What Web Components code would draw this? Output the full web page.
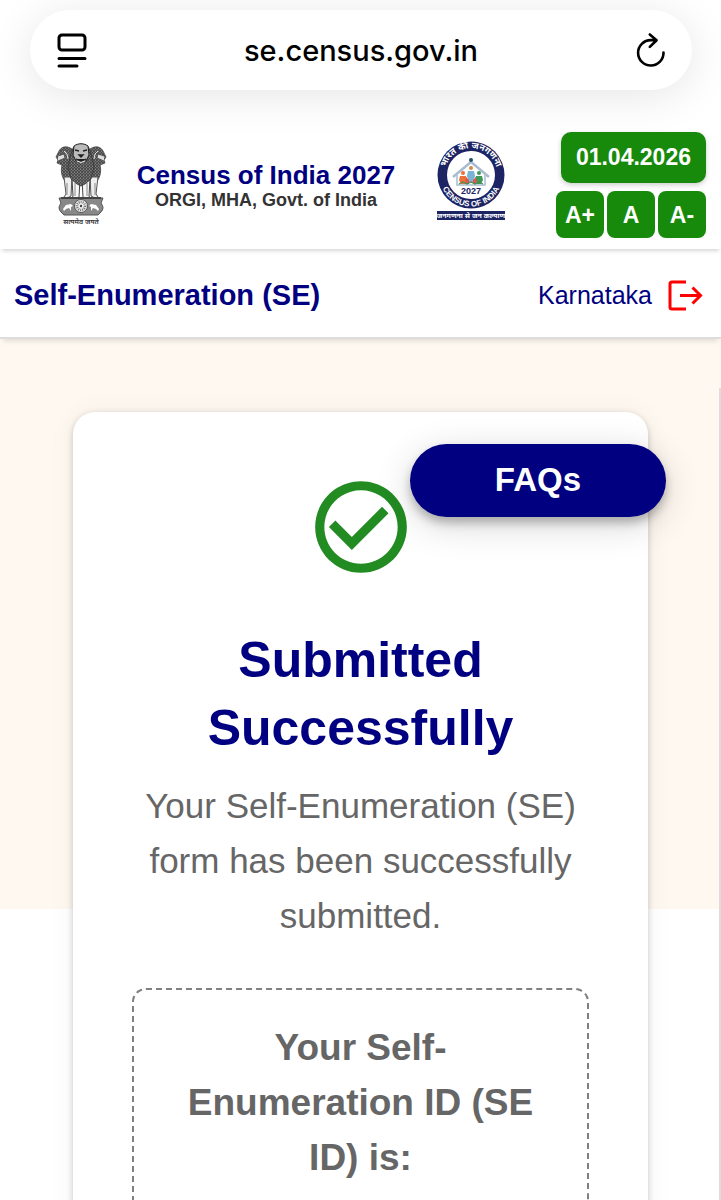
<!DOCTYPE html>
<html lang="en">
<head>
<meta charset="utf-8">
<meta name="viewport" content="width=device-width, initial-scale=1">
<title>Self-Enumeration (SE)</title>
<style>
  html, body { margin: 0; height: 100%; }
  body {
    --navy: #000080;
    --green: #178a0c;
    --grey: #666;
    font-family: "Liberation Sans", Arial, Helvetica, sans-serif;
    background: #fff;
    color: #333;
  }
</style>
</head>
<body>
<census-app>
  <address-bar slot="browser" url="se.census.gov.in"></address-bar>
  <site-header slot="header" date="01.04.2026">
    <span slot="title">Census of India 2027</span>
    <span slot="subtitle">ORGI, MHA, Govt. of India</span>
  </site-header>
  <page-nav slot="nav" region="Karnataka">Self-Enumeration (SE)</page-nav>
  <faq-button slot="float">FAQs</faq-button>
  <success-card>
    <span slot="heading">Submitted Successfully</span>
    <span slot="message">Your Self-Enumeration (SE) form has been successfully submitted.</span>
    <se-id-box>Your Self-Enumeration ID (SE ID) is:</se-id-box>
  </success-card>
</census-app>

<script>
class CensusApp extends HTMLElement {
  constructor() {
    super();
    this.attachShadow({ mode: "open" });
    this.shadowRoot.innerHTML = `
      <style>
        :host { display: flex; flex-direction: column; position: relative; height: 100vh; overflow: hidden; }
        main {
          flex: 1;
          display: flex;
          padding: 73px 73px 0;
          background: linear-gradient(#fff8f1, #fff8f1) no-repeat 0 0 / 100% 570px;
        }
        .thumb { position: absolute; right: 0; top: 388px; bottom: 0; width: 2px; background: #ddd; }
      </style>
      <slot name="browser"></slot>
      <slot name="header"></slot>
      <slot name="nav"></slot>
      <main><slot></slot></main>
      <slot name="float"></slot>
      <div class="thumb"></div>
    `;
  }
}

class AddressBar extends HTMLElement {
  constructor() {
    super();
    this.attachShadow({ mode: "open" });
    this.render();
  }

  render() {
    this.shadowRoot.innerHTML = `
      <style>
        :host { display: block; padding: 10px 29px 0 30px; }
        form {
          display: flex;
          align-items: center;
          height: 80px;
          padding: 0 26px;
          box-sizing: border-box;
          border-radius: 40px;
          background: #fff;
          box-shadow: 0 6px 44px rgba(0, 0, 0, .1);
        }
        button { border: 0; padding: 0; background: none; display: flex; color: #000; }
        input {
          flex: 1;
          min-width: 0;
          border: 0;
          padding: 2px 0 0;
          background: none;
          text-align: center;
          font: 500 29px/40px Inter, sans-serif;
          color: #000;
        }
        svg { display: block; fill: none; stroke: currentColor; stroke-width: 3; stroke-linecap: round; }
      </style>
      <form>
        <button type="button" aria-label="Page menu">
          <svg width="32" height="36" viewBox="0 0 32 36">
            <rect x="3" y="3" width="26" height="15" rx="3"/>
            <path d="M3 26.500h26M3 34h18"/>
          </svg>
        </button>
        <input type="text" aria-label="Address" value="${this.getAttribute("url") || ""}" readonly>
        <button type="button" aria-label="Reload">
          <svg width="32" height="36" viewBox="0 0 32 36">
            <path d="M29.500 20.500a12.700 12.700 0 1 1-12.700-12.400h5.500M15.800 2.500l6.800 5.700-6.800 6.700" stroke-linejoin="round" stroke-width="2.600"/>
          </svg>
        </button>
      </form>
    `;
  }
}

class NationalEmblem extends HTMLElement {
  constructor() {
    super();
    this.attachShadow({ mode: "open" });
    this.shadowRoot.innerHTML = `
      <style>
        :host { display: block; }
        svg { display: block; }
        text { font-family: "Noto Sans", sans-serif; font-size: 7px; font-weight: 600; }
      </style>
      <svg width="52" height="86" viewBox="0 0 52 86" role="img" aria-label="State Emblem of India">
        <defs>
          <pattern id="fur" width="3" height="3" patternUnits="userSpaceOnUse">
            <rect width="3" height="3" fill="#858585"/>
            <path d="M0 0l1.500 2L3 0M0 3l1.500-1L3 3" stroke="#333" stroke-width=".8" fill="none"/>
          </pattern>
        </defs>
        <!-- side lions -->
        <path d="M17 7C11 3 6 5 4 9L1 15l2 3-1 3 5 2c-2 8 1 15 5 18h9z" fill="url(#fur)" stroke="#444" stroke-width=".8"/>
        <path d="M35 7c6-4 11-2 13 2l3 6-2 3 1 3-5 2c2 8-1 15-5 18h-9z" fill="url(#fur)" stroke="#444" stroke-width=".8"/>
        <path d="M3 14l6-2 1 4-7 3M49 14l-6-2-1 4 7 3" fill="#ddd" stroke="#444" stroke-width=".8"/>
        <path d="M9 9q4 2 4 8M43 9q-4 2-4 8" fill="none" stroke="#ddd"/>
        <!-- legs -->
        <path d="M9 35h8l-1 19-6 3-1-2 2-3zM43 35h-8l1 19 6 3 1-2-2-3z" fill="#eee" stroke="#555"/>
        <path d="M17 37h8l-1 18-2 3h-6l2-4zM35 37h-8l1 18 2 3h6l-2-4z" fill="#f7f7f7" stroke="#444"/>
        <path d="M20 41v13M32 41v13M12 41v12M40 41v12" stroke="#888"/>
        <!-- front lion -->
        <path d="M18 6c2-5 14-5 16 0l3 9 2 10-3 12-6 5-4 2-4-2-6-5-3-12 2-10z" fill="url(#fur)" stroke="#333" stroke-width=".8"/>
        <path d="M19 4c4-3 10-3 14 0l1 9-3 6H21l-3-6z" fill="#bbb" stroke="#222"/>
        <path d="M20 8l4 1M32 8l-4 1M24 13h4l-2 2zM21 17q5 3 10 0" fill="#222" stroke="#222" stroke-width="1.400"/>
        <path d="M22 19q4 3 8 0" stroke="#eee" fill="none"/>
        <!-- abacus -->
        <path d="M4 56h44l-2 5q4 5 0 9l-3 3H9l-3-3q-4-4 0-9z" fill="#888" stroke="#555"/>
        <path d="M6 56h40" stroke="#444" stroke-width="2"/>
        <circle cx="26" cy="64" r="6.500" fill="#eee" stroke="#555"/>
        <circle cx="26" cy="64" r="4" fill="none" stroke="#777" stroke-width="2.500" stroke-dasharray="1 1"/>
        <circle cx="26" cy="64" r="1.200" fill="#444"/>
        <path d="M8 67l3-4 5-1 2 2-2 1v4l-2-3-3 1-2 2zM44 67l-3-4-5-1-2 2 2 1v4l2-3 3 1 2 2z" fill="#fff"/>
        <text x="26" y="82" text-anchor="middle" fill="#333">सत्यमेव जयते</text>
      </svg>
    `;
  }
}

class CensusLogo extends HTMLElement {
  constructor() {
    super();
    this.attachShadow({ mode: "open" });
    this.shadowRoot.innerHTML = `
      <style>
        :host { display: block; }
        svg { display: block; }
        text { font-family: "Liberation Sans", "Noto Sans", sans-serif; font-weight: 700; }
      </style>
      <svg width="68" height="80" viewBox="0 0 68 80" role="img" aria-label="Census of India 2027 logo">
        <defs>
          <path id="top" d="M8.200 40A26.500 26.500 0 1 1 59.800 40"/>
          <path id="bottom" d="M2.500 34a31.500 31.500 0 0 0 63 0"/>
        </defs>
        <circle cx="34" cy="34" r="33.500" fill="#1c2464"/>
        <circle cx="34" cy="34" r="24" fill="#fff"/>
        <text font-size="9" fill="#fff" text-anchor="middle"><textPath href="#top" startOffset="50%">भारत की जनगणना</textPath></text>
        <text font-size="8" fill="#fff" text-anchor="middle"><textPath href="#bottom" startOffset="50%">CENSUS OF INDIA</textPath></text>
        <!-- house -->
        <path d="M16 36L34 21l18 15" fill="none" stroke="#a9bdd0" stroke-width="2.500"/>
        <path d="M20 34v10h28V34" fill="none" stroke="#a9bdd0" stroke-width="1.500"/>
        <circle cx="34" cy="19" r="2" fill="#234c6a"/>
        <circle cx="34" cy="27" r="2" fill="#ce8b48"/>
        <path d="M31 30h6l1 5-2 7h-4l-2-7z" fill="#7ab4d4"/>
        <g fill="#ee7139"><circle cx="26" cy="32" r="2"/><path d="M23 35h6l1 3-2 5h-4l-2-4z"/></g>
        <g fill="#3d9a59"><circle cx="42" cy="32" r="2"/><path d="M39 35h6l1 4-2 4h-4l-2-5z"/></g>
        <path d="M29 36l3 3v4h-4zM39 36l-3 3v4h4z" fill="#df5648"/>
        <path d="M22 43l4-2 4 2 4-2 4 2 4-2 4 2" fill="none" stroke="#498d58" stroke-width="1.200"/>
        <text x="34" y="53" font-size="9" fill="#1c2464" text-anchor="middle">2027</text>
        <rect x="0" y="70" width="68" height="9" fill="#1c2464"/>
        <text x="34" y="77" font-size="7" fill="#fff" text-anchor="middle">जनगणना से जन कल्याण</text>
      </svg>
    `;
  }
}

class SiteHeader extends HTMLElement {
  constructor() {
    super();
    this.attachShadow({ mode: "open" });
    this.render();
  }

  render() {
    this.shadowRoot.innerHTML = `
      <style>
        :host { display: block; }
        header {
          display: flex;
          align-items: center;
          padding: 42px 15px 11px 55px;
          box-shadow: 0 4px 4px -2px rgba(0, 0, 0, .16);
        }
        .title { flex: 1; padding: 2px 12px 0 0; text-align: center; font-weight: 700; white-space: nowrap; }
        .name { font-size: 26px; line-height: 28px; color: var(--navy); }
        .org { font-size: 18px; line-height: 22px; }
        census-logo { align-self: flex-start; margin-top: 9px; }
        .tools { display: flex; flex-direction: column; align-items: flex-end; gap: 8px; margin-left: 51px; }
        time, button {
          border: 0;
          border-radius: 8px;
          background: var(--green);
          color: #fff;
          font: 700 23px/26px "Liberation Sans", Arial, sans-serif;
        }
        time { padding: 12px 15px 13px; border-radius: 10px; box-shadow: 0 2px 5px rgba(0, 0, 0, .2); }
        .sizes { display: flex; gap: 3px; }
        button { width: 48px; height: 47px; padding: 0; }
      </style>
      <header>
        <national-emblem></national-emblem>
        <div class="title">
          <div class="name"><slot name="title"></slot></div>
          <div class="org"><slot name="subtitle"></slot></div>
        </div>
        <census-logo></census-logo>
        <div class="tools">
          <time>${this.getAttribute("date") || ""}</time>
          <div class="sizes">
            <button type="button">A+</button>
            <button type="button">A</button>
            <button type="button">A-</button>
          </div>
        </div>
      </header>
    `;
  }
}

class PageNav extends HTMLElement {
  constructor() {
    super();
    this.attachShadow({ mode: "open" });
    this.render();
  }

  render() {
    this.shadowRoot.innerHTML = `
      <style>
        :host { display: block; }
        nav {
          display: flex;
          align-items: center;
          gap: 15px;
          padding: 29px 18px 24px 14px;
          border-bottom: 2px solid #ddd;
          color: var(--navy);
          box-shadow: 0 5px 5px -3px rgba(0, 0, 0, .12);
          position: relative;
        }
        .page { flex: 1; font-size: 29px; line-height: 35px; font-weight: 700; }
        .region { font-size: 25px; line-height: 35px; }
        button { border: 0; padding: 0; background: none; }
        svg { display: block; fill: none; stroke: #f00; stroke-width: 3; }
      </style>
      <nav>
        <span class="page"><slot></slot></span>
        <span class="region">${this.getAttribute("region") || ""}</span>
        <button type="button" aria-label="Log out">
          <svg width="36" height="32" viewBox="0 0 36 32">
            <path d="M19 2H5q-2 0-2 2v23q0 2 2 2h14"/>
            <path d="M13 15.500h20M25.500 7.500l8 8-8 8"/>
          </svg>
        </button>
      </nav>
    `;
  }
}

class FaqButton extends HTMLElement {
  constructor() {
    super();
    this.attachShadow({ mode: "open" });
    // floats over the card, so it is placed from the right edge of the page
    this.shadowRoot.innerHTML = `
      <style>
        :host { position: absolute; top: 444px; right: 55px; }
        button {
          padding: 18px 85px 19px;
          border: 0;
          border-radius: 37px;
          background: var(--navy);
          color: #fff;
          font: 700 33px/36px "Liberation Sans", Arial, sans-serif;
          box-shadow: 0 6px 10px rgba(0, 0, 0, .25), 0 8px 36px rgba(0, 0, 0, .16);
        }
      </style>
      <button type="button"><slot></slot></button>
    `;
  }
}

class SuccessCard extends HTMLElement {
  constructor() {
    super();
    this.attachShadow({ mode: "open" });
    this.shadowRoot.innerHTML = `
      <style>
        :host {
          flex: 1;
          display: block;
          padding: 60px 59px 0;
          border-radius: 22px 22px 0 0;
          background: #fff;
          box-shadow: 0 2px 6px rgba(0, 0, 0, .2), 0 0 28px rgba(0, 0, 0, .05);
          text-align: center;
        }
        svg { display: block; margin: 0 auto 44px; fill: #228b22; }
        h1 { margin: 0 0 16px; font-size: 50px; line-height: 68px; color: var(--navy); }
        p { margin: 0 0 45px; font-size: 35px; line-height: 55px; color: var(--grey); }
      </style>
      <svg width="110" height="110" viewBox="0 0 24 24" aria-hidden="true">
        <path d="M16.590 7.580L10 14.170l-3.590-3.580L5 12l5 5 8-8zM12 2C6.480 2 2 6.480 2 12s4.480 10 10 10 10-4.480 10-10S17.520 2 12 2zm0 18c-4.420 0-8-3.580-8-8s3.580-8 8-8 8 3.580 8 8-3.580 8-8 8z"/>
      </svg>
      <h1><slot name="heading"></slot></h1>
      <p><slot name="message"></slot></p>
      <slot></slot>
    `;
  }
}

class SeIdBox extends HTMLElement {
  constructor() {
    super();
    this.attachShadow({ mode: "open" });
    this.shadowRoot.innerHTML = `
      <style>
        :host {
          display: block;
          min-height: 260px;
          padding: 30px;
          border: 2px dashed #808080;
          border-radius: 14px;
          color: var(--grey);
        }
        h2 { margin: 0; font-size: 37px; line-height: 55px; }
      </style>
      <h2><slot></slot></h2>
    `;
  }
}

customElements.define("national-emblem", NationalEmblem);
customElements.define("census-logo", CensusLogo);
customElements.define("address-bar", AddressBar);
customElements.define("site-header", SiteHeader);
customElements.define("page-nav", PageNav);
customElements.define("faq-button", FaqButton);
customElements.define("se-id-box", SeIdBox);
customElements.define("success-card", SuccessCard);
customElements.define("census-app", CensusApp);
</script>
</body>
</html>
